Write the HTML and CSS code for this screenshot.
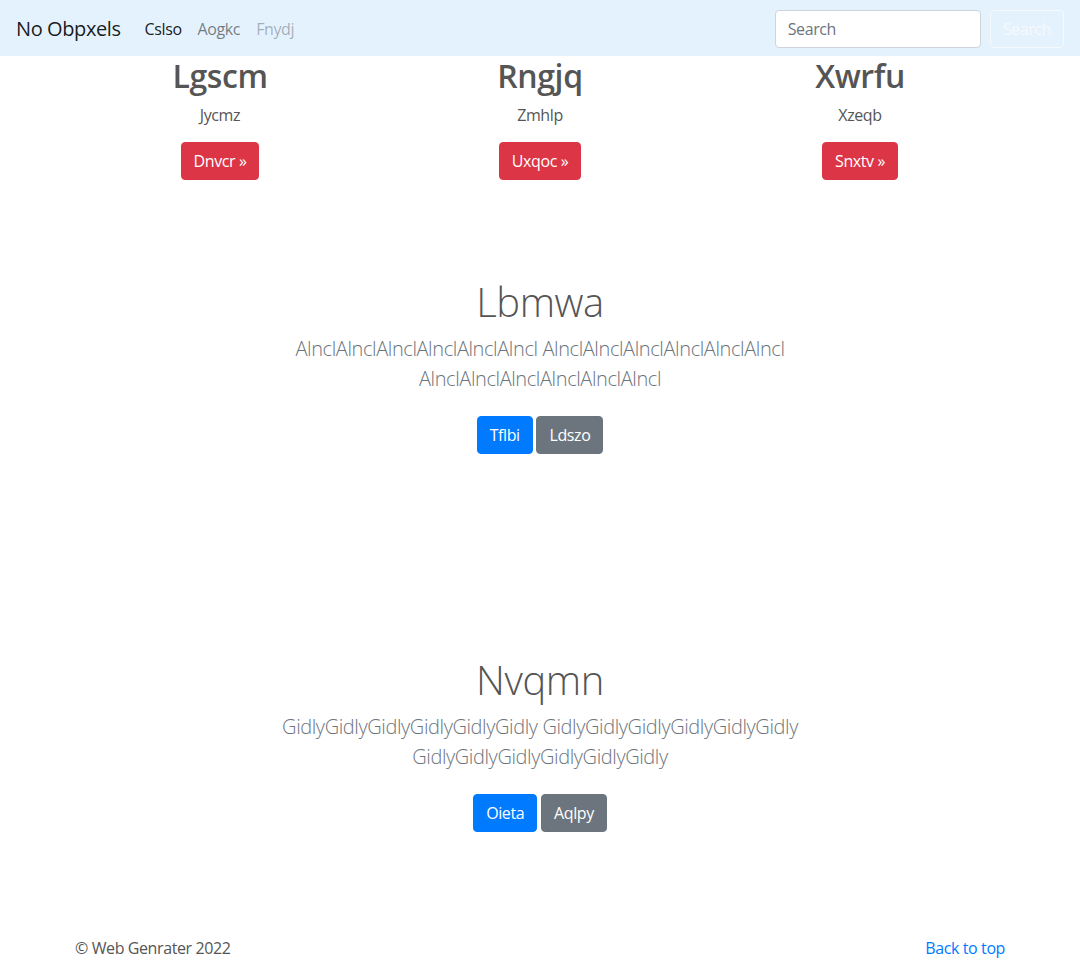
FILE: index.html
```html
<!DOCTYPE html>
<html lang="en">
<head>
<meta charset="utf-8">
<title>No Obpxels</title>
<link rel="stylesheet" href="styles.css">
</head>
<body>
<nav class="navbar">
  <a class="brand" href="#">No Obpxels</a>
  <ul class="nav">
    <li><a class="nav-link active" href="#">Cslso</a></li>
    <li><a class="nav-link" href="#">Aogkc</a></li>
    <li><a class="nav-link disabled" href="#">Fnydj</a></li>
  </ul>
  <form class="search">
    <input class="search-input" type="search" placeholder="Search">
    <button class="btn btn-outline-light" type="button">Search</button>
  </form>
</nav>

<main>
  <div class="container">
    <div class="features">
      <div class="feature">
        <h2>Lgscm</h2>
        <p>Jycmz</p>
        <p class="actions"><a class="btn btn-danger" href="#">Dnvcr &raquo;</a></p>
      </div>
      <div class="feature">
        <h2>Rngjq</h2>
        <p>Zmhlp</p>
        <p class="actions"><a class="btn btn-danger" href="#">Uxqoc &raquo;</a></p>
      </div>
      <div class="feature">
        <h2>Xwrfu</h2>
        <p>Xzeqb</p>
        <p class="actions"><a class="btn btn-danger" href="#">Snxtv &raquo;</a></p>
      </div>
    </div>
  </div>

  <section class="hero">
    <div class="hero-inner">
      <h1>Lbmwa</h1>
      <p class="lead">AlnclAlnclAlnclAlnclAlnclAlncl AlnclAlnclAlnclAlnclAlnclAlncl AlnclAlnclAlnclAlnclAlnclAlncl</p>
      <p class="hero-actions">
        <a class="btn btn-primary" href="#">Tflbi</a>
        <a class="btn btn-secondary" href="#">Ldszo</a>
      </p>
    </div>
  </section>

  <section class="hero">
    <div class="hero-inner">
      <h1>Nvqmn</h1>
      <p class="lead">GidlyGidlyGidlyGidlyGidlyGidly GidlyGidlyGidlyGidlyGidlyGidly GidlyGidlyGidlyGidlyGidlyGidly</p>
      <p class="hero-actions">
        <a class="btn btn-primary" href="#">Oieta</a>
        <a class="btn btn-secondary" href="#">Aqlpy</a>
      </p>
    </div>
  </section>
</main>

<footer class="container footer">
  <p class="copy">&copy; Web Genrater 2022</p>
  <a class="to-top" href="#">Back to top</a>
</footer>
</body>
</html>
```

FILE: styles.css
```css
* { box-sizing: border-box; }

html, body {
  margin: 0;
  padding: 0;
}

body {
  font-family: "Open Sans", "Noto Sans", "Liberation Sans", sans-serif;
  font-size: 16px;
  line-height: 1.5;
  letter-spacing: -0.025em;
  color: #555;
  background: #fff;
}

a { text-decoration: none; }

/* Navbar */
.navbar {
  display: flex;
  align-items: center;
  height: 56px;
  padding: 9px 16px 7px;
  background-color: #e3f2fd;
}

.brand {
  font-size: 20px;
  line-height: 30px;
  color: rgba(0, 0, 0, 0.9);
  margin-right: 16px;
}

.nav {
  display: flex;
  list-style: none;
  margin: 0;
  padding: 0;
  flex: 1;
}

.nav-link {
  display: block;
  padding: 8px;
  color: rgba(0, 0, 0, 0.5);
}

.nav-link.active { color: rgba(0, 0, 0, 0.9); }
.nav-link.disabled { color: rgba(0, 0, 0, 0.3); }

.search {
  display: flex;
  align-items: center;
}

.search-input {
  width: 206px;
  height: 38px;
  padding: 6px 12px;
  font: inherit;
  letter-spacing: inherit;
  color: #495057;
  background: #fff;
  border: 1px solid #ced4da;
  border-radius: 4px;
  margin-right: 9px;
}

.search-input::placeholder { color: #6c757d; }

/* Buttons */
.btn {
  display: inline-block;
  font-family: inherit;
  font-size: 16px;
  line-height: 24px;
  letter-spacing: inherit;
  padding: 6px 12px;
  border: 1px solid transparent;
  border-radius: 4px;
  color: #fff;
  background: transparent;
  cursor: pointer;
  vertical-align: middle;
}

.btn-outline-light {
  color: #f8f9fa;
  border-color: #f8f9fa;
}

.btn-danger { background: #dc3545; border-color: #dc3545; }
.btn-primary { background: #007bff; border-color: #007bff; }
.btn-secondary { background: #6c757d; border-color: #6c757d; }

/* Layout */
.container {
  width: 960px;
  margin: 0 auto;
  padding: 0 15px;
}

.features {
  display: grid;
  grid-template-columns: repeat(3, 1fr);
  margin: 0 -15px;
  text-align: center;
}

.feature { padding: 0 15px; }

.feature h2 {
  margin: 0 0 8px;
  font-size: 32px;
  font-weight: 600;
  line-height: 1.2;
  padding-top: 1px;
}

.feature p { margin: 0 0 15px; }
.feature p.actions { margin: 0; }

.hero {
  padding: 96px 0;
  text-align: center;
}

.hero-inner {
  max-width: 610px;
  margin: 0 auto;
}

.hero h1 {
  margin: 0 0 8px;
  padding-top: 2px;
  font-size: 40px;
  font-weight: 300;
  line-height: 1.2;
}

.lead {
  margin: 0 0 14px;
  font-size: 20px;
  font-weight: 300;
  line-height: 30px;
  color: #6c757d;
}

.hero-actions { margin: 0; }

.hero-actions .btn { margin: 8px 0; }

/* Footer */
.footer {
  display: flex;
  justify-content: space-between;
  align-items: center;
  height: 24px;
}

.copy { margin: 0; }

.to-top { color: #007bff; }
```
